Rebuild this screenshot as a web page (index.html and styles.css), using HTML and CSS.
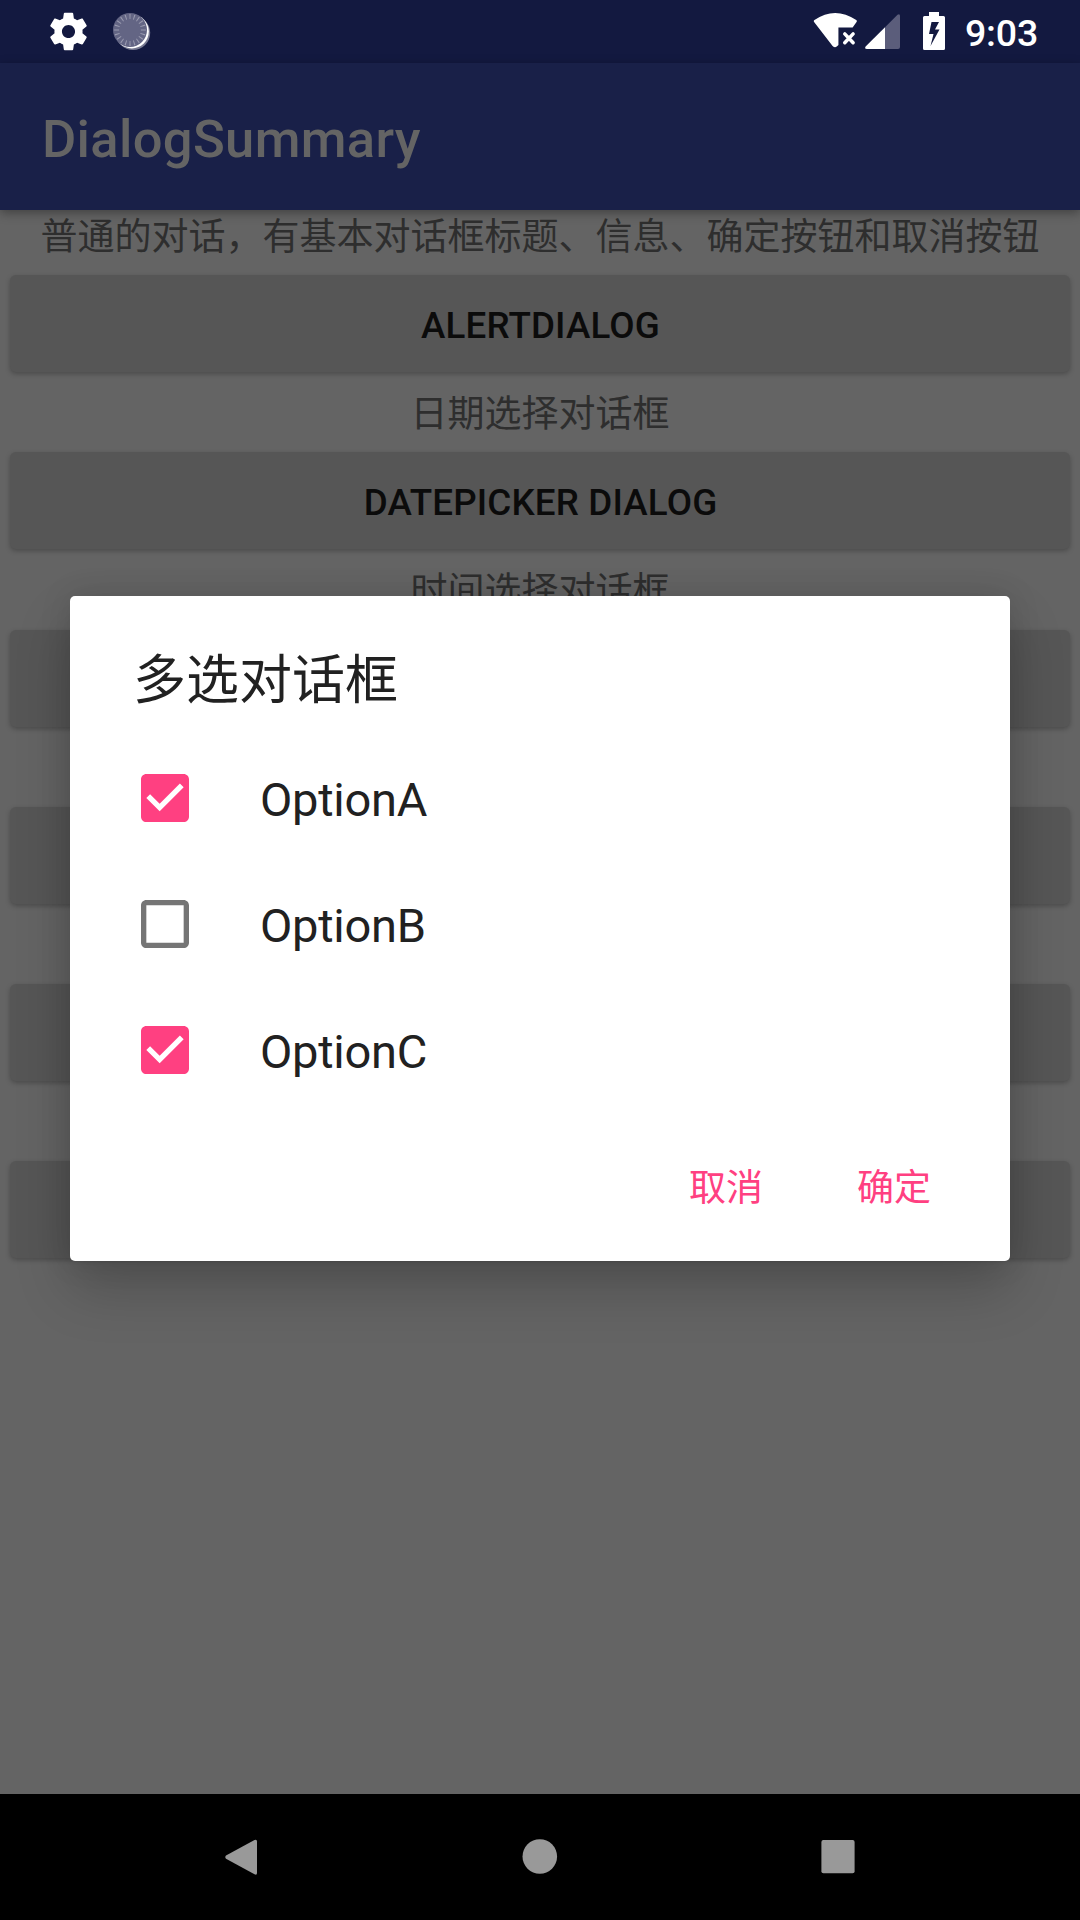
FILE: index.html
```html
<!DOCTYPE html>
<html lang="zh">
<head>
<meta charset="utf-8">
<title>DialogSummary</title>
<link rel="stylesheet" href="styles.css">
</head>
<body>
<div class="screen">
  <header class="status-bar">
    <svg class="icon-gear" viewBox="0 0 24 24"><path d="M19.43 12.98c.04-.32.07-.64.07-.98s-.03-.66-.07-.98l2.11-1.65c.19-.15.24-.42.12-.64l-2-3.46c-.12-.22-.39-.3-.61-.22l-2.49 1c-.52-.4-1.08-.73-1.69-.98l-.38-2.65C14.46 2.18 14.25 2 14 2h-4c-.25 0-.46.18-.49.42l-.38 2.65c-.61.25-1.17.59-1.69.98l-2.49-1c-.23-.09-.49 0-.61.22l-2 3.46c-.13.22-.07.49.12.64l2.11 1.65c-.04.32-.07.65-.07.98s.03.66.07.98l-2.11 1.65c-.19.15-.24.42-.12.64l2 3.46c.12.22.39.3.61.22l2.49-1c.52.4 1.08.73 1.69.98l.38 2.65c.03.24.24.42.49.42h4c.25 0 .46-.18.49-.42l.38-2.65c.61-.25 1.17-.59 1.69-.98l2.49 1c.23.09.49 0 .61-.22l2-3.46c.12-.22.07-.49-.12-.64l-2.11-1.65zM12 15.5c-1.93 0-3.5-1.57-3.5-3.5s1.57-3.5 3.5-3.5 3.5 1.57 3.5 3.5-1.57 3.5-3.5 3.5z"/></svg>
    <svg class="icon-sync" viewBox="0 0 40 40">
      <circle class="sync-edge" cx="21" cy="20.8" r="17.2"/>
      <circle class="sync-glow" cx="19.8" cy="19.4" r="17"/>
      <circle class="sync-disc" cx="18" cy="18" r="17"/>
      <circle class="sync-ticks" cx="18" cy="18" r="13.4" pathLength="200"/>
    </svg>
    <div class="status-right">
      <svg class="icon-wifi" viewBox="0 0 46 38"><path d="M1.4 8.2Q22.5-6.4 44.3 8.2Q45.4 9 44.6 10.2L40.6 16H26V34Q23 38 20 34.8L1 10.2Q.2 9 1.4 8.2Z"/><path class="wifi-x" d="M32.5 22.5l8.6 9M41.1 22.5l-8.6 9"/></svg>
      <svg class="icon-signal" viewBox="0 0 35 35"><path class="signal-dim" d="M32.5.7Q35-.8 35 2V33Q35 35 33 35H20V13.3Z"/><path d="M20 13.3V35H2Q-.8 35 .6 32.6Z"/></svg>
      <svg class="icon-battery" viewBox="0 0 22 38"><path fill-rule="evenodd" d="M6 0H16V4H20.5Q22 4 22 5.5V36.5Q22 38 20.5 38H1.5Q0 38 0 36.5V5.5Q0 4 1.5 4H6ZM8.5 10L6 22H10.5L7.5 34L16.5 17.5H12L16 10Z"/></svg>
      <span class="clock">9:03</span>
    </div>
  </header>
  <div class="app-bar"><h1 class="app-title">DialogSummary</h1></div>
  <main class="content">
    <p class="caption">普通的对话，有基本对话框标题、信息、确定按钮和取消按钮</p>
    <button class="raised">AlertDialog</button>
    <p class="caption">日期选择对话框</p>
    <button class="raised">DatePicker Dialog</button>
    <p class="caption">时间选择对话框</p>
    <button class="raised"></button>
    <p class="caption"></p>
    <button class="raised"></button>
    <p class="caption"></p>
    <button class="raised"></button>
    <p class="caption"></p>
    <button class="raised"></button>
  </main>
  <nav class="nav-bar">
    <svg class="nav-icon" viewBox="0 0 36 36"><path d="M2 16.6L30.5 1Q33 0 33 2.5V34Q33 36.5 30.5 35.3L2 19.8Q.6 18.2 2 16.6Z"/></svg>
    <svg class="nav-icon" viewBox="0 0 36 36"><circle cx="17.8" cy="17.5" r="17.3"/></svg>
    <svg class="nav-icon" viewBox="0 0 36 36"><rect x="1.4" y="1" width="33.2" height="33.2" rx="2"/></svg>
  </nav>
  <section class="dialog" role="dialog">
    <h2 class="dialog-title">多选对话框</h2>
    <ul class="options">
      <li class="option"><svg class="box" viewBox="3 3 18 18"><path class="box-on" d="M19 3H5c-1.11 0-2 .9-2 2v14c0 1.1.89 2 2 2h14c1.11 0 2-.9 2-2V5c0-1.1-.89-2-2-2zm-9 14l-5-5 1.41-1.41L10 14.17l7.59-7.59L19 8l-9 9z"/></svg><span>OptionA</span></li>
      <li class="option"><svg class="box" viewBox="3 3 18 18"><path class="box-off" d="M19 5v14H5V5h14m0-2H5c-1.1 0-2 .9-2 2v14c0 1.1.9 2 2 2h14c1.1 0 2-.9 2-2V5c0-1.1-.9-2-2-2z"/></svg><span>OptionB</span></li>
      <li class="option"><svg class="box" viewBox="3 3 18 18"><path class="box-on" d="M19 3H5c-1.11 0-2 .9-2 2v14c0 1.1.89 2 2 2h14c1.11 0 2-.9 2-2V5c0-1.1-.89-2-2-2zm-9 14l-5-5 1.41-1.41L10 14.17l7.59-7.59L19 8l-9 9z"/></svg><span>OptionC</span></li>
    </ul>
    <div class="actions"><button class="flat">取消</button><button class="flat">确定</button></div>
  </section>
</div>
</body>
</html>
```
FILE: styles.css
```css
* { box-sizing: border-box; margin: 0; padding: 0; }
body { background: #646464; font-family: Roboto, "Noto Sans CJK SC", sans-serif; }
button { border: 0; font-family: inherit; }
svg { display: block; flex: none; }

.screen { position: relative; width: 1080px; height: 1920px; overflow: hidden; display: flex; flex-direction: column; }

.status-bar { height: 63px; flex: none; display: flex; background: #131940; fill: #fff; padding: 0 42px 0 46px; }
.icon-gear { width: 45px; height: 45px; margin-top: 9px; }
.icon-sync { width: 40px; height: 40px; margin: 12px 0 0 21px; }
.sync-edge { fill: #777991; }
.sync-glow { fill: #fff; }
.sync-disc { fill: #636584; }
.sync-ticks { fill: none; stroke: #9a9bb0; stroke-width: 5; stroke-dasharray: 2.4 7.6; stroke-dashoffset: 1.2; }
.status-right { margin-left: auto; display: flex; }
.icon-wifi { width: 45px; height: 37px; margin: 12px 1px 0 0; }
.wifi-x { fill: none; stroke: #fff; stroke-width: 3.6; stroke-linecap: round; }
.icon-signal { width: 35px; height: 35px; margin: 14px 0 0 6px; }
.signal-dim { fill: #5b5d7b; }
.icon-battery { width: 22px; height: 38px; margin: 12px 0 0 23px; }
.clock { width: 73px; margin-left: 20px; color: #fff; font-size: 37.5px; font-weight: 500; letter-spacing: -.2px; line-height: 44px; padding-top: 11px; white-space: nowrap; }

.app-bar { position: relative; height: 147px; flex: none; display: flex; align-items: center; padding: 4px 42px 0; background: #192048; box-shadow: 0 3px 10px rgba(0, 0, 0, .35); }
.app-title { color: #646464; font-size: 52.5px; font-weight: 500; letter-spacing: .35px; line-height: 62px; }

.content { flex: 1; display: flex; flex-direction: column; }
.caption { height: 51.2px; flex: none; color: #2e2e2e; font-size: 37px; line-height: 55px; text-align: center; white-space: nowrap; }
.raised { height: 97px; flex: none; margin: 14px 10px 15px; border-radius: 6px; background: #565656; box-shadow: 0 2px 5px rgba(0, 0, 0, .25); color: #0b0b0b; font-size: 36.75px; font-weight: 500; letter-spacing: .15px; text-transform: uppercase; padding: 4px 0 0 1px; }

.nav-bar { height: 126px; flex: none; display: flex; justify-content: center; gap: 262px; padding: 45px 1px 0 0; background: #000; fill: #999; }
.nav-icon { width: 36px; height: 36px; }

.dialog { position: absolute; left: 70px; top: 596px; width: 940px; height: 665px; border-radius: 5px; background: #fff; color: #212121; box-shadow: 0 28px 56px rgba(0, 0, 0, .2), 0 0 32px rgba(0, 0, 0, .12); }
.dialog-title { height: 139px; padding: 47px 63px 0; font-size: 53px; font-weight: 400; line-height: 76px; }
.options { list-style: none; }
.option { height: 126px; display: flex; align-items: center; padding-left: 71px; gap: 71px; font-size: 47px; letter-spacing: -.25px; }
.option span { padding-top: 2px; }
.box { width: 48px; height: 48px; }
.box-on { fill: #ff4081; }
.box-off { fill: #757575; }
.actions { display: flex; justify-content: flex-end; gap: 94px; padding: 49px 79px 0; }
.flat { background: none; color: #ff4081; font-size: 37px; font-weight: 400; line-height: 54px; }
```
